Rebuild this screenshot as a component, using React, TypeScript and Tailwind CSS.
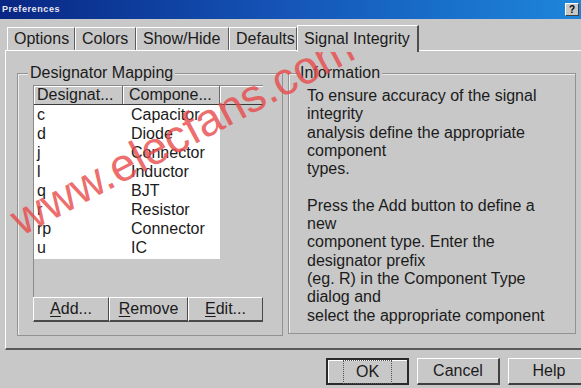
const rows = [
  ['c', 'Capacitor'],
  ['d', 'Diode'],
  ['j', 'Connector'],
  ['l', 'Inductor'],
  ['q', 'BJT'],
  ['r', 'Resistor'],
  ['rp', 'Connector'],
  ['u', 'IC'],
];

const tabs = [
  { label: 'Options', w: 'w-[68px]' },
  { label: 'Colors', w: 'w-[61px]' },
  { label: 'Show/Hide', w: 'w-[93px]' },
  { label: 'Defaults', w: 'w-[68px]' },
];

const info = [
  'To ensure accuracy of the signal',
  'integrity',
  'analysis define the appropriate',
  'component',
  'types.',
  '\u00a0',
  'Press the Add button to define a',
  'new',
  'component type. Enter the',
  'designator prefix',
  '(eg. R) in the Component Type',
  'dialog and',
  'select the appropriate component',
];

function Underlined({ first, rest }: { first: string; rest: string }) {
  return (
    <span>
      <span className="underline underline-offset-2">{first}</span>
      {rest}
    </span>
  );
}

export default function App() {
  return (
    <div className="relative w-[581px] h-[388px] overflow-hidden bg-[#c8c8c8] font-['Liberation_Sans',Arial,sans-serif] text-[16px] text-[#1b1b1b]">
      {/* title bar */}
      <div className="h-[19px] flex items-center justify-between pl-[2px] pr-[2px] bg-gradient-to-r from-[#0a2684] via-[#1556b8] to-[#1e86da]">
        <span className="text-[9px] font-bold text-[#e8e8f0] tracking-[0.6px] leading-none">Preferences</span>
        <span className="w-[14px] h-[13px] flex items-center justify-center bg-[#c8c8c8] border border-t-white border-l-white border-r-[#404040] border-b-[#404040] text-[10px] font-bold leading-none text-black">
          ?
        </span>
      </div>

      {/* tabs */}
      <div className="flex items-end h-[31px] pl-[7px]">
        {tabs.map((t) => (
          <div
            key={t.label}
            className={`${t.w} h-[23px] flex items-center pl-[6px] border-t border-l border-r border-t-white border-l-white border-r-[#5c5c5c] leading-none`}
          >
            {t.label}
          </div>
        ))}
        <div className="relative z-10 w-[122px] h-[27px] -mb-[2px] flex items-start pt-[5px] pl-[6px] bg-[#c8c8c8] border-t border-l border-r-2 border-t-white border-l-white border-r-[#4e4e4e] leading-none">
          Signal Integrity
        </div>
      </div>

      {/* tab panel */}
      <div className="ml-[5px] w-[600px] h-[300px] border-t border-l border-b-2 border-t-white border-l-white border-b-[#5a5a5a] flex gap-[5px] pl-[11px] pt-[13px]">
        {/* Designator Mapping */}
        <fieldset className="w-[266px] h-[272px] border border-[#929292] shadow-[inset_1px_1px_0_#ececec]">
          <legend className="ml-[10px] px-[2px] leading-[18px] bg-[#c8c8c8]">Designator Mapping</legend>
          <div className="mt-[3px] ml-[15px] w-[230px] flex flex-col">
            <div className="w-[230px] h-[212px] flex flex-col border-l border-t border-[#8a8a8a] bg-[#c8c8c8]">
              <div className="flex h-[19px] border-b border-[#3a3a3a] leading-none">
                <div className="w-[89px] flex items-center pl-[3px] border-r border-[#6a6a6a] shadow-[inset_1px_1px_0_#fff]">Designat...</div>
                <div className="w-[97px] flex items-center pl-[6px] border-r border-[#6a6a6a] shadow-[inset_1px_1px_0_#fff]">Compone...</div>
                <div className="flex-1 shadow-[inset_1px_1px_0_#fff]" />
              </div>
              <div className="w-[186px] h-[154px] bg-white flex flex-col">
                {rows.map(([d, c], i) => (
                  <div key={i} className="h-[19px] flex items-center leading-none">
                    <span className="w-[97px] pl-[3px]">{d}</span>
                    <span>{c}</span>
                  </div>
                ))}
              </div>
            </div>
            <div className="flex h-[25px] leading-none">
              {[
                ['A', 'dd...', 'w-[76px]'],
                ['R', 'emove', 'w-[79px]'],
                ['E', 'dit...', 'w-[75px]'],
              ].map(([f, r, w]) => (
                <div
                  key={f}
                  className={`${w} flex items-center justify-center border border-t-white border-l-white border-r-[#4a4a4a] border-b-[#4a4a4a] border-b-2`}
                >
                  <Underlined first={f} rest={r} />
                </div>
              ))}
            </div>
          </div>
        </fieldset>

        {/* Information */}
        <fieldset className="w-[288px] h-[270px] border border-[#929292] shadow-[inset_1px_1px_0_#ececec]">
          <legend className="ml-[9px] px-[2px] leading-[18px] bg-[#c8c8c8]">Information</legend>
          <div className="pt-[5px] pl-[18px] leading-[18.3px]">
            {info.map((l, i) => (
              <div key={i}>{l}</div>
            ))}
          </div>
        </fieldset>
      </div>

      {/* dialog buttons */}
      <div className="flex gap-[8px] pl-[326px] pt-[8px] leading-none">
        <div className="w-[83px] h-[27px] shrink-0 flex items-center justify-center border-2 border-[#2a2a2a] shadow-[inset_1px_1px_0_#fff]">
          <span className="px-[12px] py-[3px] border border-dotted border-[#555]">OK</span>
        </div>
        <div className="w-[83px] h-[27px] shrink-0 flex items-center justify-center border border-t-white border-l-white border-r-[#404040] border-b-[#404040] border-b-2 border-r-2">
          Cancel
        </div>
        <div className="w-[83px] h-[27px] shrink-0 flex items-center justify-center border border-t-white border-l-white border-r-[#404040] border-b-[#404040] border-b-2 border-r-2">
          Help
        </div>
      </div>

      {/* watermark */}
      <div className="pointer-events-none absolute left-[-14px] top-[108px] w-[392px] text-center text-[46px] leading-[50px] text-[#e84a4a] opacity-80 rotate-[-28deg]">
        www.elecfans.com
      </div>
    </div>
  );
}
